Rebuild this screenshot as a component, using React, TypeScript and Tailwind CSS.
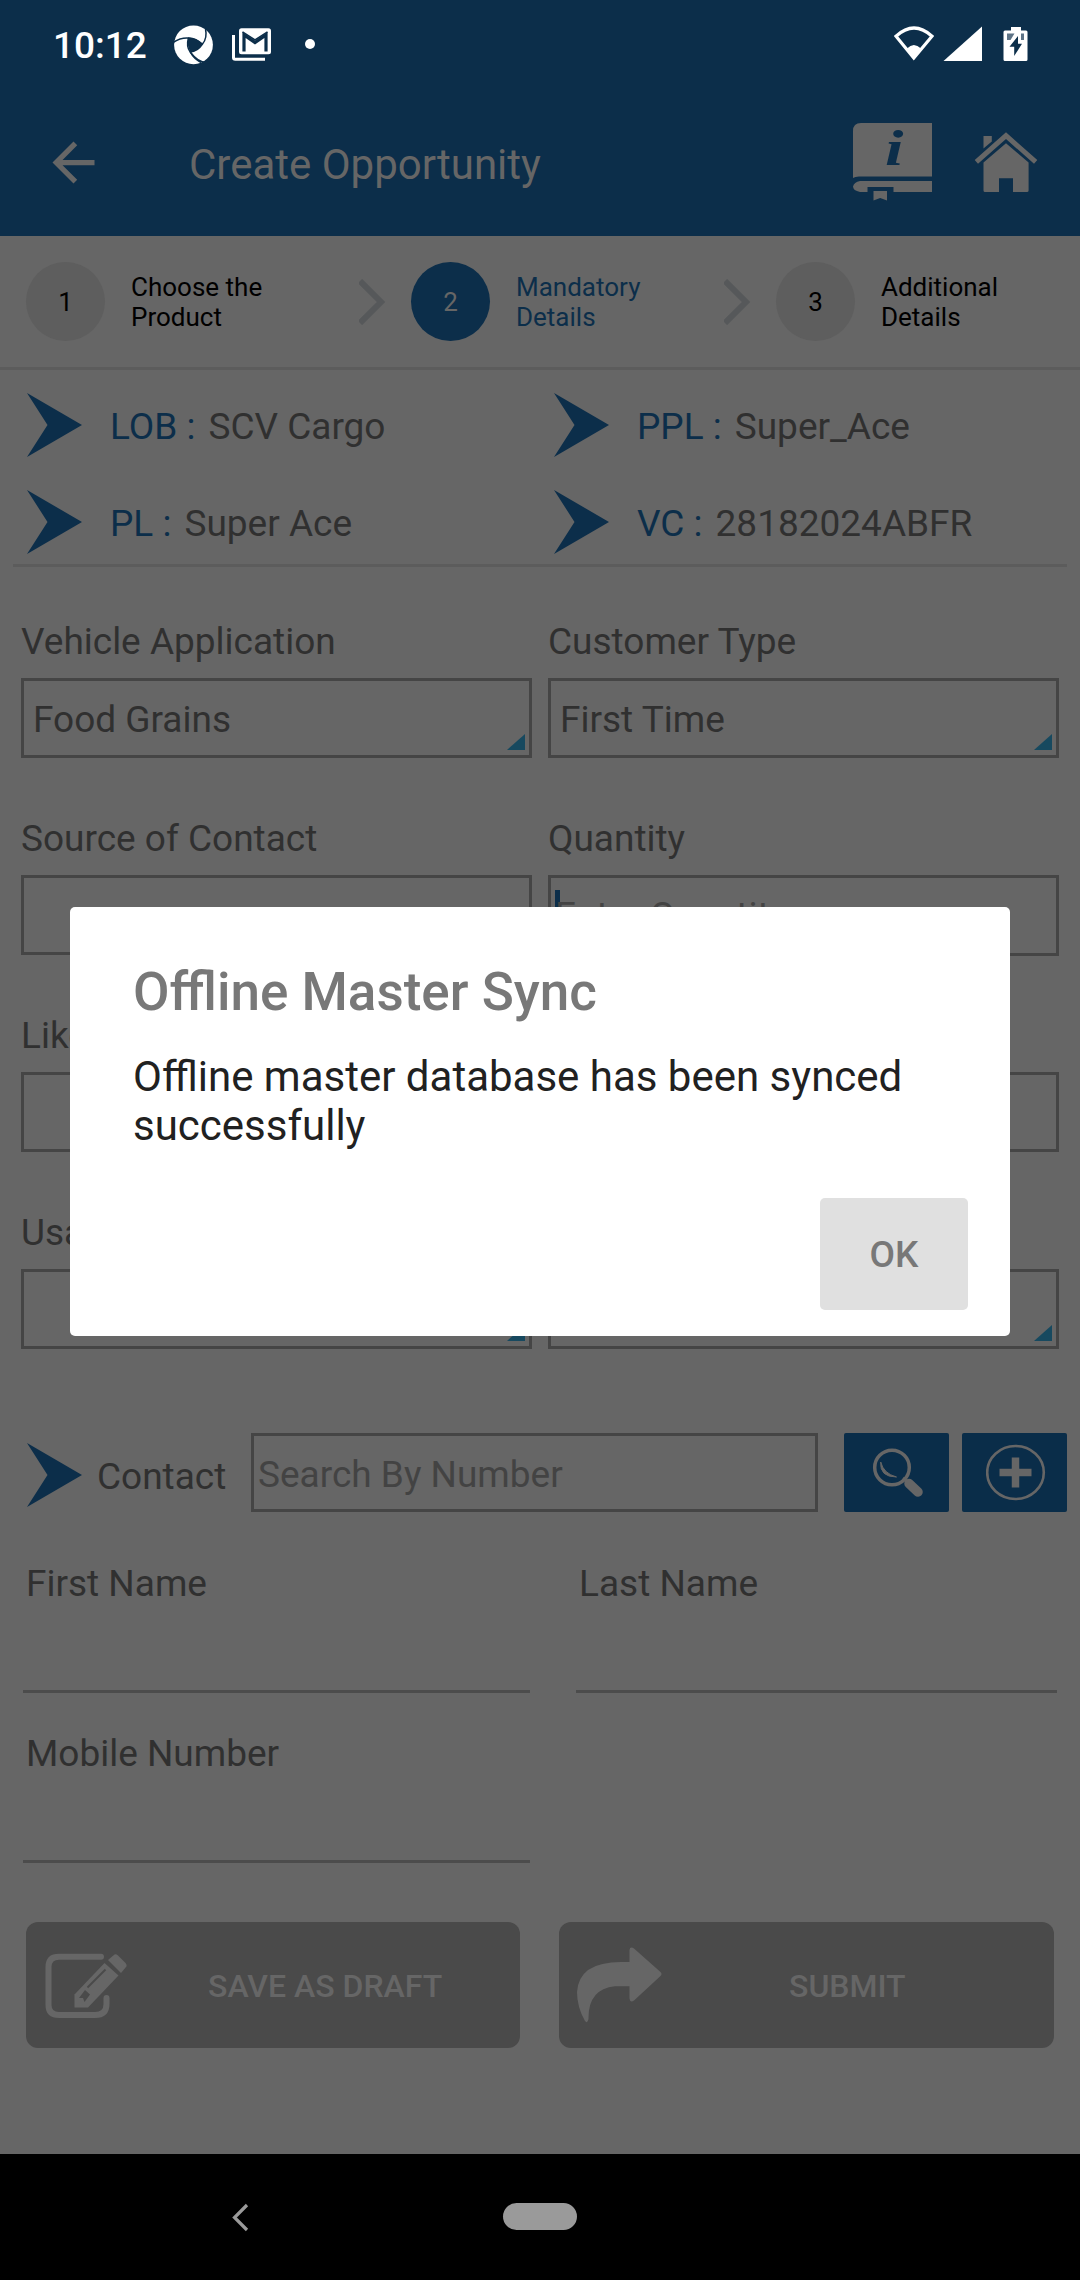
import React from "react";

const ROBOTO = "font-['Roboto','Liberation_Sans',sans-serif]";

function StatusBar() {
  return (
    <div className="flex h-[88px] items-start text-white">
      <div className="ml-[53px] mt-[24px] w-[120px] text-[37px] leading-[44px] font-medium">10:12</div>
      <svg className="mt-[25px]" width="41" height="41" viewBox="0 0 41 41">
        <circle cx="20.5" cy="19.8" r="19.4" fill="#fff" />
        <g fill="none" stroke="#0c2e4a" strokeWidth="1.5">
          <path d="M0 17.5Q15 8 29.5 19" />
          <path d="M32.5 4Q34.5 13 29.5 19Q24.500 26.500 17.200 27" />
          <path d="M15.500 12.500Q13 22 17.200 27Q21 34 28 37.500" />
          <path d="M17.200 27Q27 40 37 37" />
        </g>
        <path d="M15.400 12.300Q24 12.500 29.500 19Q25 26.200 17.200 27Q13.500 20 15.400 12.300Z" fill="#0c2e4a" />
      </svg>
      <svg className="ml-[18px] mt-[28px]" width="40" height="34" viewBox="0 0 40 34">
        <path d="M1.500 7V29.500Q1.500 31.300 3.300 31.300H33" fill="none" stroke="#fff" strokeWidth="3" />
        <rect x="7" y="0.200" width="32" height="26" rx="2.500" fill="#fff" />
        <path d="M12 23.500V7L23 14.500L34 7V23.500" fill="none" stroke="#0c2e4a" strokeWidth="3.200" />
        <path d="M10.500 3.800L23 12L35.500 3.800" fill="none" stroke="#0c2e4a" strokeWidth="1.500" />
      </svg>
      <div className="ml-[33px] mt-[39px] h-[10px] w-[10px] rounded-full bg-white" />
      <svg className="ml-[579px] mt-[26px]" width="40" height="35" viewBox="0 0 40 35">
        <path d="M2 10.200Q20 -6.200 38 10.200L19.800 32Z" fill="none" stroke="#fff" strokeWidth="3.200" />
        <path d="M13 22.500Q19.800 15.500 27 22.500L19.800 32.500Z" fill="#fff" />
      </svg>
      <svg className="ml-[9px] mt-[26px]" width="40" height="35" viewBox="0 0 40 35">
        <path d="M0.500 35L39 0.500V35Z" fill="#fff" />
      </svg>
      <svg className="ml-[20px] mt-[27px]" width="25" height="34" viewBox="0 0 25 34">
        <path d="M8 0H18V3.500H23Q24.500 3.500 24.500 5V32.500Q24.500 34 23 34H2Q0.500 34 0.500 32.500V5Q0.500 3.500 2 3.500H8Z" fill="#fff" />
        <path d="M4 6.500H11.500L7.500 13H4ZM18 6.500H21V13H18Z" fill="#5d7386" />
        <path d="M15 9V16.800H19L11.200 29V19.700H6.500Z" fill="#0c2e4a" />
      </svg>
    </div>
  );
}

function AppBar() {
  return (
    <div className="flex h-[148px] items-start text-[#666666]">
      <svg className="ml-[42px] mt-[43px]" width="63" height="63" viewBox="0 0 24 24" fill="currentColor">
        <path d="M20 11H7.830l5.590-5.590L12 4l-8 8 8 8 1.410-1.410L7.830 13H20v-2z" />
      </svg>
      <div className="ml-[84px] mt-[52px] w-[664px] text-[42px] leading-[49px]">Create Opportunity</div>
      <div className="relative mt-[35px] h-[80px] w-[79px]">
        <svg width="79" height="80" viewBox="0 0 79 80" fill="currentColor">
          <path d="M8 0H79V53.500H6Q2 53.500 0 55V8Q0 0 8 0Z" />
          <path d="M7 58H79V69H40.500V64H14.500V69H7Q0 67.500 0 63.500Q1 59 7 58Z" />
          <path d="M20.500 68H34V77.500L27.200 75L20.500 77.500Z" />
        </svg>
        <span className="absolute left-[32px] top-[-3px] origin-left scale-x-[1.3] font-['Liberation_Serif',serif] text-[51px] leading-[56px] font-bold italic text-[#0c2e4a]">i</span>
      </div>
      <svg className="ml-[42px] mt-[44px]" width="64" height="61" viewBox="0 0 64 61" fill="currentColor">
        <path d="M32 0.300L63.300 28L60 31.800L32 7L4 31.800L0.700 28Z" />
        <path d="M9.500 4H17.800V9.500L9.500 16.500Z" />
        <path d="M32 11.300L54.600 30.500V58.500Q54.600 60 53 60H39V46.200H25V60H11Q9.500 60 9.500 58.500V30.500Z" />
      </svg>
    </div>
  );
}

function StepCircle({ n, active }: { n: string; active?: boolean }) {
  return (
    <div
      className={
        "flex h-[79px] w-[79px] items-center justify-center rounded-full text-[26px] leading-[30px] " +
        (active ? "bg-[#0c2e4a] text-[#666666]" : "bg-[#5e5e5e] text-black")
      }
    >
      {n}
    </div>
  );
}

function StepChevron() {
  return (
    <svg width="27" height="46" viewBox="0 0 27 46">
      <path d="M1 2L22 23L1 44" fill="none" stroke="#56585a" strokeWidth="6" />
    </svg>
  );
}

function Steps() {
  return (
    <div className="flex h-[134px] items-center border-b-[3px] border-[#5c5c5c] text-[26px] leading-[30px] text-black">
      <div className="ml-[26px]"><StepCircle n="1" /></div>
      <div className="ml-[26px] w-[228px]">Choose the<br />Product</div>
      <StepChevron />
      <div className="ml-[25px]"><StepCircle n="2" active /></div>
      <div className="ml-[26px] w-[208px] text-[#0c2e4a]">Mandatory<br />Details</div>
      <StepChevron />
      <div className="ml-[25px]"><StepCircle n="3" /></div>
      <div className="ml-[26px]">Additional<br />Details</div>
    </div>
  );
}

function Marker() {
  return (
    <svg className="shrink-0" width="55" height="64" viewBox="0 0 55 64">
      <path d="M0 0L55 32L0 64L20.500 32Z" fill="#0c2e4a" />
    </svg>
  );
}

function Info({ label, value }: { label: string; value: string }) {
  return (
    <div className="flex h-[97px] w-[527px] items-start pl-[27px] pt-[23px]">
      <Marker />
      <div className="ml-[28px] mt-[12px] flex gap-[13px] whitespace-nowrap leading-[43px]">
        <span className="text-[#0c2e4a]">{label}</span>
        <span>{value}</span>
      </div>
    </div>
  );
}

function Field({ label, value, spinner, focused }: { label?: string; value?: string; spinner?: boolean; focused?: boolean }) {
  return (
    <div className="h-[197px] w-[511px]">
      <div className="h-[43px] leading-[43px]">{label}</div>
      <div className={"relative mt-[15px] flex items-start border-[3px] border-[#454545] leading-[43px] " + (focused ? "h-[81px]" : "h-[80px]")}>
        {value && <span className="ml-[9px] mt-[17px]">{value}</span>}
        {focused && (
          <>
            <span className="ml-[4px] mt-[12px] h-[50px] w-[5px] bg-[#0c2e4a]" />
            <span className="-ml-[5px] mt-[16px] text-[#434343]">Enter Quantity</span>
          </>
        )}
        {spinner && (
          <svg className="absolute bottom-[5px] right-[4px]" width="18" height="16" viewBox="0 0 18 16">
            <path d="M0 16L18 0V16Z" fill="#17495f" />
          </svg>
        )}
      </div>
    </div>
  );
}

function LineField({ label, className }: { label: string; className: string }) {
  return (
    <div className={"h-[170px] " + className}>
      <div className="pl-[3px] leading-[43px]">{label}</div>
      <div className="mt-[84.500px] h-[3px] bg-[#4c4c4c]" />
    </div>
  );
}

function ContactRow() {
  return (
    <div className="flex h-[104px] items-start pl-[27px] pt-[25px]">
      <div className="mt-[10px]"><Marker /></div>
      <div className="ml-[15px] mt-[22px] w-[154px] leading-[43px]">Contact</div>
      <div className="h-[79px] w-[567px] border-[3px] border-[#454545] pl-[4px] pt-[17px] leading-[43px] text-[#434343]">
        Search By Number
      </div>
      <div className="ml-[26px] flex h-[79px] w-[105px] items-start rounded-[2px] bg-[#0a2d49] pl-[28px] pt-[15px]">
        <svg width="52" height="50" viewBox="0 0 52 50" fill="none" stroke="#666666">
          <circle cx="20" cy="19.500" r="17.300" strokeWidth="3.500" />
          <path d="M8.700 14Q7.500 29 24.500 29Q11.500 25.500 8.700 14Z" fill="#666666" strokeWidth="1" />
          <path d="M31 30L36 34" strokeWidth="3" />
          <path d="M37 35.500L46 44" strokeWidth="9.500" strokeLinecap="round" />
        </svg>
      </div>
      <div className="ml-[13px] flex h-[79px] w-[105px] items-start rounded-[2px] bg-[#0a2d49] pl-[24px] pt-[11px]">
        <svg width="60" height="57" viewBox="0 0 60 57" stroke="#666666" fill="none">
          <ellipse cx="29.500" cy="28.500" rx="28.300" ry="26.500" strokeWidth="2.600" />
          <path d="M13.500 28.500H45.500M29.500 13.500V43.500" strokeWidth="7.500" />
        </svg>
      </div>
    </div>
  );
}

function Buttons() {
  return (
    <div className="flex h-[252px] items-start pl-[26px] pt-[20px] text-[32px] leading-[37px] font-medium text-[#666666]">
      <div className="flex h-[126px] w-[494px] items-start rounded-[12px] bg-[#4a4a4a] pl-[18px]">
        <svg className="mt-[30px] shrink-0" width="84" height="68" viewBox="0 0 84 68">
          <path d="M57 4.800H15Q4.500 4.800 4.500 15V53Q4.500 63 15 63H51Q62.500 63 62.500 52V46" fill="none" stroke="#666666" strokeWidth="6" strokeLinecap="round" />
          <path d="M60.500 11L74.500 23.500L44 55.500H30.500V42.500Z" fill="#666666" />
          <path d="M64 8L70.500 2.500Q72 1.500 74 3.500L81.500 11Q83.500 13.500 82 15L77 21Z" fill="#666666" />
          <path d="M61.500 17.500L43.500 35.500" stroke="#4a4a4a" strokeWidth="2" />
          <path d="M41 38L46 42.500L40.500 50L39 46H35Z" fill="#4a4a4a" />
        </svg>
        <div className="ml-[80px] mt-[46px]">SAVE AS DRAFT</div>
      </div>
      <div className="ml-[39px] flex h-[126px] w-[495px] items-start rounded-[12px] bg-[#4a4a4a] pl-[18px]">
        <svg className="mt-[25px] shrink-0" width="85" height="76" viewBox="0 0 85 76">
          <path d="M52.500 15V3Q53 -1 57 1.500L83.500 25Q85.500 27 83.500 29L57 53.500Q53 56 52.500 51.500V39.300H38Q11 42 11.500 72Q10.500 77 8 74Q0 60 0 45Q2 15 44 15Z" fill="#666666" />
        </svg>
        <div className="ml-[127px] mt-[46px]">SUBMIT</div>
      </div>
    </div>
  );
}

function NavBar() {
  return (
    <div className="flex h-[126px] items-start bg-black">
      <svg className="ml-[231px] mt-[49px]" width="18" height="29" viewBox="0 0 18 29">
        <path d="M16 2L3.500 14.500L16 27" fill="none" stroke="#9a9a9a" strokeWidth="3.200" />
      </svg>
      <div className="ml-[254px] mt-[49px] h-[27px] w-[74px] rounded-full bg-[#9a9a9a]" />
    </div>
  );
}

function Dialog() {
  return (
    <div className="absolute left-[70px] top-[907px] flex h-[429px] w-[940px] flex-col rounded-[5px] bg-white pl-[63px] pr-[42px] pt-[54px]">
      <h2 className="text-[53px] leading-[62px] font-medium text-[#787878]">Offline Master Sync</h2>
      <p className="mt-[29px] w-[800px] text-[42px] leading-[49px] text-[#212121]">Offline master database has been synced successfully</p>
      <button className="mt-[48px] flex h-[112px] w-[148px] items-center justify-center self-end rounded-[5px] bg-[#e0e0e0] pt-px text-[37px] leading-[43px] font-medium text-[#787878]">
        OK
      </button>
    </div>
  );
}

export default function App() {
  return (
    <div className={"relative h-[2280px] w-[1080px] overflow-hidden bg-[#666666] text-[37px] text-[#303030] " + ROBOTO}>
      <div className="h-[236px] bg-[#0c2e4a]">
        <StatusBar />
        <AppBar />
      </div>
      <Steps />
      <div className="grid grid-cols-[527px_527px]">
        <Info label="LOB :" value="SCV Cargo" />
        <Info label="PPL :" value="Super_Ace" />
        <Info label="PL :" value="Super Ace" />
        <Info label="VC :" value="28182024ABFR" />
      </div>
      <div className="mx-[13px] h-[3px] bg-[#5c5c5c]" />
      <div className="grid grid-cols-[511px_511px] gap-x-[16px] pl-[21px] pt-[53px]">
        <Field label="Vehicle Application" value="Food Grains" spinner />
        <Field label="Customer Type" value="First Time" spinner />
        <Field label="Source of Contact" spinner />
        <Field label="Quantity" focused />
        <Field label="Likely" />
        <Field />
        <Field label="Usage" spinner />
        <Field spinner />
      </div>
      <ContactRow />
      <div className="flex flex-wrap pl-[23px] pt-[50px]">
        <LineField label="First Name" className="w-[507px]" />
        <LineField label="Last Name" className="ml-[46px] w-[481px]" />
        <LineField label="Mobile Number" className="w-[507px]" />
      </div>
      <Buttons />
      <NavBar />
      <Dialog />
    </div>
  );
}
